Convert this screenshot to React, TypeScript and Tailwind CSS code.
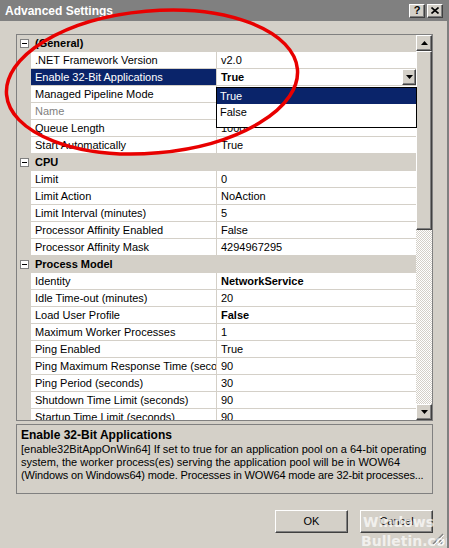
import React from 'react';

type Row =
  | { kind: 'cat'; label: string }
  | { kind: 'prop'; label: string; value: string; bold?: boolean; dim?: boolean; selected?: boolean };

const rows: Row[] = [
  { kind: 'cat', label: '(General)' },
  { kind: 'prop', label: '.NET Framework Version', value: 'v2.0' },
  { kind: 'prop', label: 'Enable 32-Bit Applications', value: 'True', bold: true, selected: true },
  { kind: 'prop', label: 'Managed Pipeline Mode', value: 'Integrated' },
  { kind: 'prop', label: 'Name', value: 'DefaultAppPool', dim: true },
  { kind: 'prop', label: 'Queue Length', value: '1000' },
  { kind: 'prop', label: 'Start Automatically', value: 'True' },
  { kind: 'cat', label: 'CPU' },
  { kind: 'prop', label: 'Limit', value: '0' },
  { kind: 'prop', label: 'Limit Action', value: 'NoAction' },
  { kind: 'prop', label: 'Limit Interval (minutes)', value: '5' },
  { kind: 'prop', label: 'Processor Affinity Enabled', value: 'False' },
  { kind: 'prop', label: 'Processor Affinity Mask', value: '4294967295' },
  { kind: 'cat', label: 'Process Model' },
  { kind: 'prop', label: 'Identity', value: 'NetworkService', bold: true },
  { kind: 'prop', label: 'Idle Time-out (minutes)', value: '20' },
  { kind: 'prop', label: 'Load User Profile', value: 'False', bold: true },
  { kind: 'prop', label: 'Maximum Worker Processes', value: '1' },
  { kind: 'prop', label: 'Ping Enabled', value: 'True' },
  { kind: 'prop', label: 'Ping Maximum Response Time (seconds)', value: '90' },
  { kind: 'prop', label: 'Ping Period (seconds)', value: '30' },
  { kind: 'prop', label: 'Shutdown Time Limit (seconds)', value: '90' },
  { kind: 'prop', label: 'Startup Time Limit (seconds)', value: '90' },
];

// classic raised 3D edge
const raised = 'border border-t-white border-l-white border-r-[#404040] border-b-[#404040] shadow-[inset_-1px_-1px_0_#808080]';

const Arrow = ({ up }: { up?: boolean }) => (
  <svg width="7" height="4" viewBox="0 0 7 4">
    <path d={up ? 'M3.5 0 L7 4 L0 4 Z' : 'M0 0 L7 0 L3.5 4 Z'} fill="#000" />
  </svg>
);

const Expander = () => (
  <div className="w-[9px] h-[9px] border border-[#808080] bg-white flex items-center justify-center">
    <div className="w-[5px] h-[1px] bg-black" />
  </div>
);

const GridRow = ({ row }: { row: Row }) => {
  if (row.kind === 'cat') {
    return (
      <div className="h-[17px] shrink-0 flex items-center bg-[#d4d0c8]">
        <div className="w-[14px] flex justify-end pr-[2px]">
          <Expander />
        </div>
        <span className="pl-[4px] font-bold">{row.label}</span>
      </div>
    );
  }
  return (
    <div className="h-[17px] shrink-0 flex">
      <div className="w-[14px] bg-[#d4d0c8]" />
      <div
        className={`w-[186px] shrink-0 border-b border-r border-[#d4d0c8] pl-[4px] flex items-center overflow-hidden whitespace-nowrap ${
          row.selected ? 'bg-[#0a246a] text-white' : row.dim ? 'bg-white text-[#808080]' : 'bg-white'
        }`}
      >
        {row.label}
      </div>
      <div className="flex-1 border-b border-[#d4d0c8] bg-white pl-[4px] flex items-center whitespace-nowrap overflow-hidden">
        <span className={`flex-1 ${row.bold ? 'font-bold' : ''}`}>{row.value}</span>
        {row.selected && (
          <div className={`w-[14px] h-[16px] bg-[#d4d0c8] flex items-center justify-center ${raised}`}>
            <Arrow />
          </div>
        )}
      </div>
    </div>
  );
};

export default function App() {
  return (
    <div className="w-[449px] h-[548px] bg-[#d4d0c8] relative overflow-hidden text-[11px] text-black font-['Liberation_Sans',Arial,sans-serif] border-r-2 border-r-[#808080]">
      {/* title bar */}
      <div className="h-[21px] bg-[#808080] flex items-center pl-[5px] pr-[4px]">
        <span className="flex-1 text-white font-bold text-[12px]">Advanced Settings</span>
        <div className="flex gap-[2px]">
          <div className={`w-[16px] h-[14px] bg-[#d4d0c8] flex items-center justify-center font-bold text-[11px] leading-none ${raised}`}>?</div>
          <div className={`w-[16px] h-[14px] bg-[#d4d0c8] flex items-center justify-center ${raised}`}>
            <svg width="8" height="7" viewBox="0 0 8 7">
              <path d="M0.5 0.5 L7.5 6.5 M7.5 0.5 L0.5 6.5" stroke="#000" strokeWidth="1.6" />
            </svg>
          </div>
        </div>
      </div>

      {/* property grid */}
      <div className="ml-[16px] mt-[13px] w-[417px] h-[387px] border border-[#808080] flex relative">
        <div className="w-[399px] flex flex-col overflow-hidden bg-white">
          {rows.map((r, i) => (
            <GridRow key={i} row={r} />
          ))}
        </div>
        {/* scrollbar */}
        <div className="w-[16px] flex flex-col bg-[repeating-conic-gradient(#d4d0c8_0_25%,#ffffff_0_50%)] bg-[length:2px_2px]">
          <div className={`h-[16px] shrink-0 bg-[#d4d0c8] flex items-center justify-center ${raised}`}>
            <Arrow up />
          </div>
          <div className={`h-[179px] shrink-0 bg-[#d4d0c8] ${raised}`} />
          <div className="flex-1" />
          <div className={`h-[16px] shrink-0 bg-[#d4d0c8] flex items-center justify-center ${raised}`}>
            <Arrow />
          </div>
        </div>

        {/* open dropdown list */}
        <div className="absolute left-[199px] top-[52px] w-[201px] h-[41px] bg-white border border-black flex flex-col">
          <div className="h-[16px] bg-[#0a246a] text-white pl-[3px] flex items-center">True</div>
          <div className="h-[16px] pl-[3px] flex items-center">False</div>
        </div>
      </div>

      {/* description */}
      <div className="ml-[16px] mt-[3px] w-[417px] h-[70px] border border-[#808080] px-[4px] pt-[3px] leading-[13px] whitespace-nowrap overflow-hidden">
        <div className="font-bold text-[12px] leading-[14px]">Enable 32-Bit Applications</div>
        <div className="mt-[1px]">[enable32BitAppOnWin64] If set to true for an application pool on a 64-bit operating</div>
        <div>system, the worker process(es) serving the application pool will be in WOW64</div>
        <div className="tracking-[-0.15px]">(Windows on Windows64) mode. Processes in WOW64 mode are 32-bit processes...</div>
      </div>

      {/* buttons */}
      <div className="flex justify-end gap-[12px] mt-[16px] pr-[14px]">
        <button className={`w-[73px] h-[23px] bg-[#d4d0c8] ${raised}`}>OK</button>
        <button className={`w-[73px] h-[23px] bg-[#d4d0c8] ${raised}`}>Cancel</button>
      </div>

      {/* resize grip */}
      <svg className="absolute right-[3px] bottom-[3px]" width="12" height="12" viewBox="0 0 12 12">
        <path d="M11 1 L1 11 M11 5 L5 11 M11 9 L9 11" stroke="#808080" strokeWidth="1.2" />
        <path d="M12 2 L2 12 M12 6 L6 12 M12 10 L10 12" stroke="#ffffff" strokeWidth="1" />
      </svg>

      {/* watermark */}
      <div className="absolute left-[361px] top-[513px] text-white/70 font-bold text-[14px] leading-[19px] font-['DejaVu_Sans',sans-serif] pointer-events-none">
        <div className="pl-[2px]">Windows</div>
        <div>Bulletin.com</div>
      </div>

      {/* red annotation ellipse */}
      <svg className="absolute left-0 top-0 pointer-events-none" width="449" height="548">
        <ellipse cx="152" cy="82" rx="146" ry="71" transform="rotate(-5 152 82)" fill="none" stroke="#e80000" strokeWidth="3.5" />
      </svg>
    </div>
  );
}
